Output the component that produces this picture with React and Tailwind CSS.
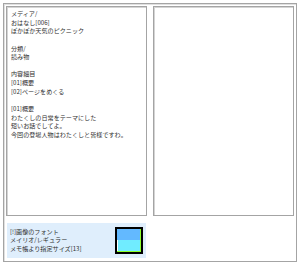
export default function App() {
  const font = { fontFamily: '"Noto Sans CJK JP", "Noto Sans", sans-serif' };
  const left = [
    "メディア/",
    "おはなし[006]",
    "ぽかぽか天気のピクニック",
    "",
    "分類/",
    "読み物",
    "",
    "内容細目",
    "[01]概要",
    "[02]ページをめくる",
    "",
    "[01]概要",
    "わたくしの日常をテーマにした",
    "短いお話でしてよ。",
    "今回の登場人物はわたくしと皆様ですわ。",
  ];
  return (
    <div className="w-[300px] h-[265px] bg-white pt-[3px] pl-[3px]">
      <div className="w-[294px] h-[259px] border border-[#a4a4a4] shadow-[inset_1px_1px_0_#e0e0e0] pt-[2px] pl-[2px]">
        <div className="flex gap-[6px]">
          <div
            className="w-[141px] h-[210px] border border-[#a4a4a4] shadow-[inset_1px_1px_0_#d4d4d4] pl-[4px] pt-[3px] text-[6.1px] leading-[8.64px] text-[#2e2e2e]"
            style={font}
          >
            {left.map((l, i) => (
              <div key={i} className="h-[8.64px] whitespace-nowrap">
                {l}
              </div>
            ))}
          </div>
          <div className="w-[141px] h-[210px] border border-[#a4a4a4] shadow-[inset_1px_1px_0_#d4d4d4]" />
        </div>
        <div className="mt-[7px] ml-[1px] w-[139px] h-[35px] bg-[#dfeefc] flex items-center justify-between pl-[3px] pr-[3px]">
          <div className="text-[6.1px] leading-[8.64px] text-[#2e2e2e]" style={font}>
            <div>[!]画像のフォント</div>
            <div>メイリオ/レギュラー</div>
            <div>メモ帳より指定サイズ[13]</div>
          </div>
          <div className="w-[28px] h-[27px] border-2 border-black">
            <div className="w-full h-full flex flex-col border-r border-r-[#8cff2a] border-b border-b-[#8cff2a]">
              <div className="flex-1 bg-[#63b9ff]" />
              <div className="flex-1 bg-[#70ecff] border-l border-l-white" />
            </div>
          </div>
        </div>
      </div>
    </div>
  );
}
